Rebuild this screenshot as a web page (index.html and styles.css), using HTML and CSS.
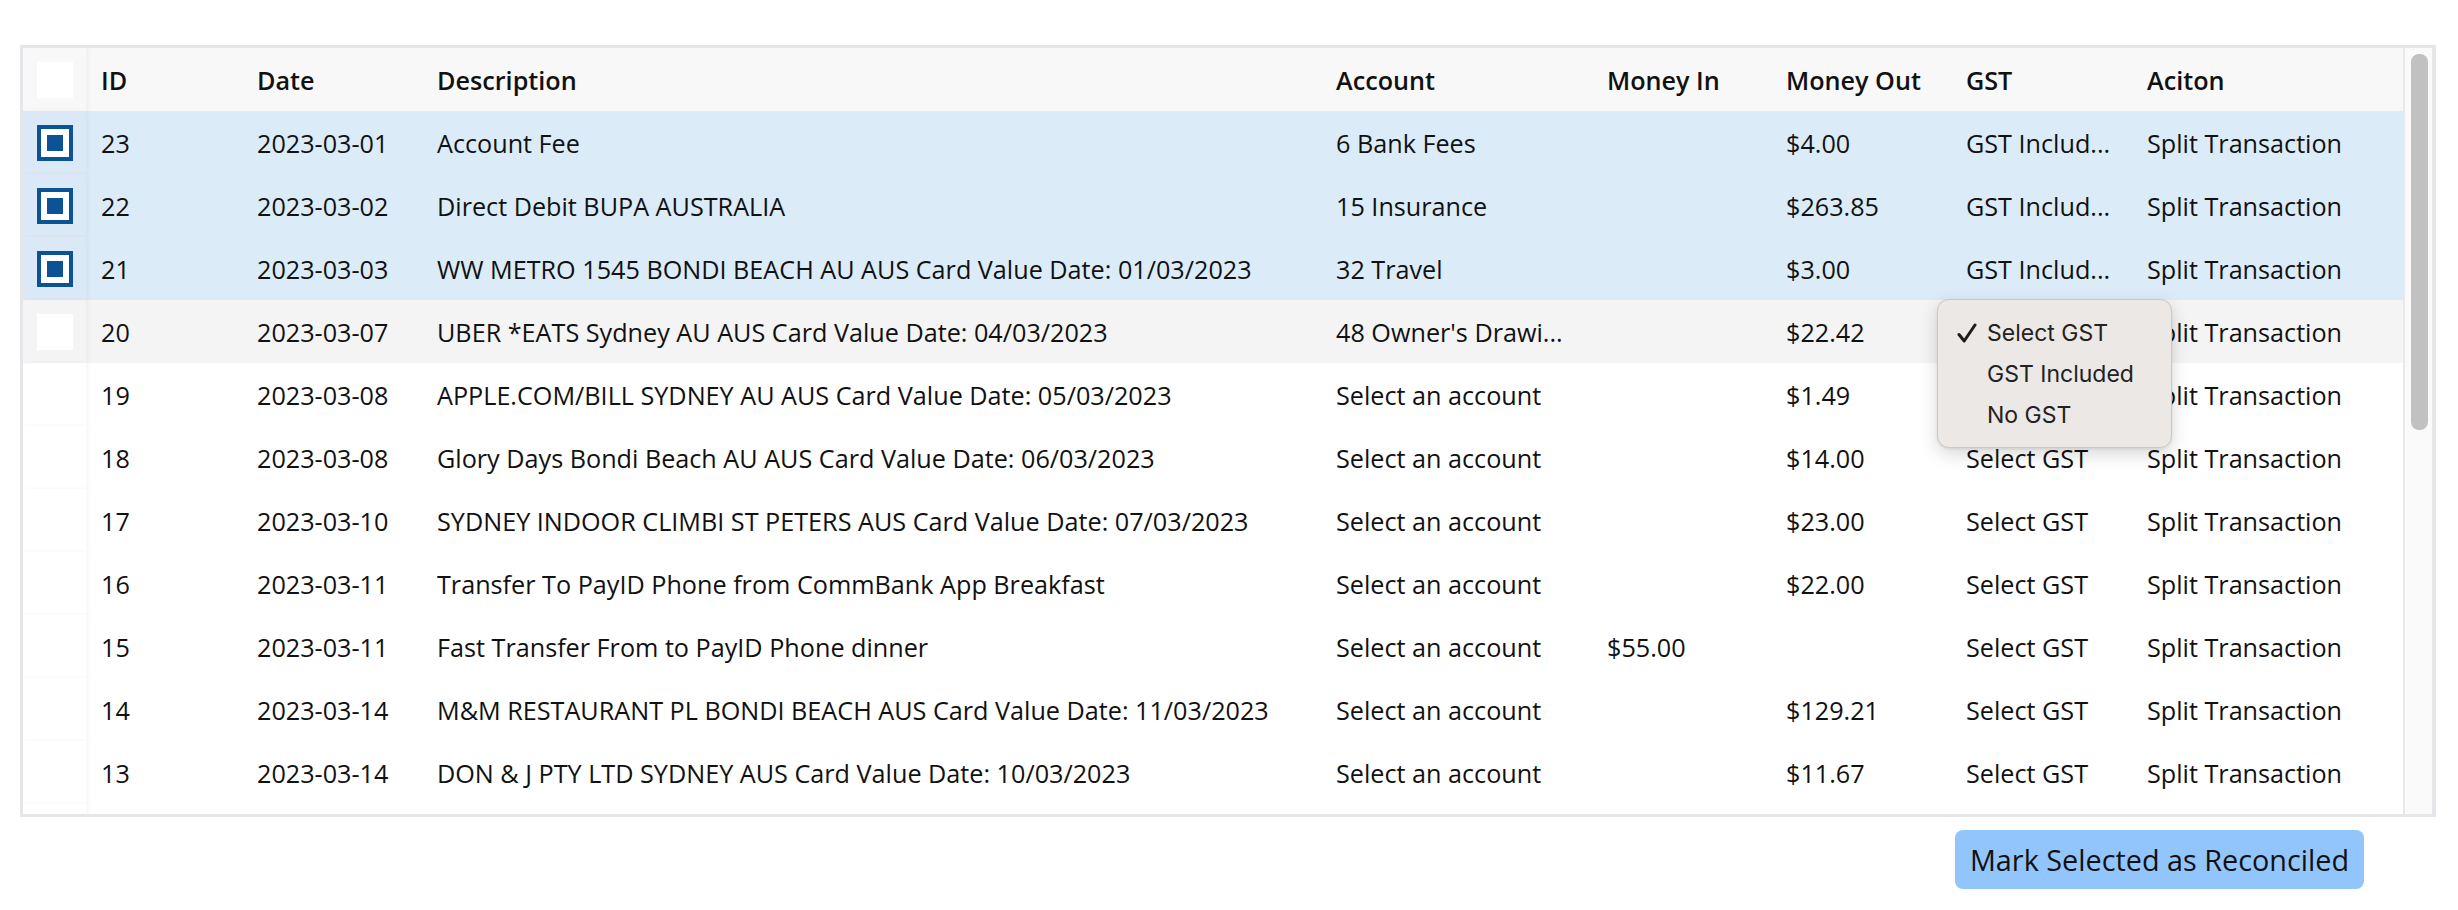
FILE: index.html
```html
<!DOCTYPE html>
<html lang="en">
<head>
<meta charset="utf-8">
<title>Transactions</title>
<link rel="stylesheet" href="styles.css">
</head>
<body>
<main class="page">
  <section class="card">
    <div class="scroller">
      <table class="tx">
        <colgroup>
          <col class="c-check"><col class="c-id"><col class="c-date"><col class="c-desc"><col class="c-acct"><col class="c-in"><col class="c-out"><col class="c-gst"><col class="c-act">
        </colgroup>
        <thead>
          <tr>
            <th class="sel"><input type="checkbox" class="cb"></th>
            <th>ID</th><th>Date</th><th>Description</th><th>Account</th><th>Money In</th><th>Money Out</th><th>GST</th><th>Aciton</th>
          </tr>
        </thead>
        <tbody>
          <tr class="selected"><td class="sel"><input type="checkbox" class="cb" checked></td><td>23</td><td>2023-03-01</td><td>Account Fee</td><td>6 Bank Fees</td><td></td><td>$4.00</td><td>GST Includ...</td><td>Split Transaction</td></tr>
          <tr class="selected"><td class="sel"><input type="checkbox" class="cb" checked></td><td>22</td><td>2023-03-02</td><td>Direct Debit BUPA AUSTRALIA</td><td>15 Insurance</td><td></td><td>$263.85</td><td>GST Includ...</td><td>Split Transaction</td></tr>
          <tr class="selected"><td class="sel"><input type="checkbox" class="cb" checked></td><td>21</td><td>2023-03-03</td><td>WW METRO 1545 BONDI BEACH AU AUS Card Value Date: 01/03/2023</td><td>32 Travel</td><td></td><td>$3.00</td><td>GST Includ...</td><td>Split Transaction</td></tr>
          <tr class="hover"><td class="sel"><input type="checkbox" class="cb"></td><td>20</td><td>2023-03-07</td><td>UBER *EATS Sydney AU AUS Card Value Date: 04/03/2023</td><td>48 Owner's Drawi...</td><td></td><td>$22.42</td><td>Select GST</td><td>Split Transaction</td></tr>
          <tr><td class="sel"></td><td>19</td><td>2023-03-08</td><td>APPLE.COM/BILL SYDNEY AU AUS Card Value Date: 05/03/2023</td><td>Select an account</td><td></td><td>$1.49</td><td>Select GST</td><td>Split Transaction</td></tr>
          <tr><td class="sel"></td><td>18</td><td>2023-03-08</td><td>Glory Days Bondi Beach AU AUS Card Value Date: 06/03/2023</td><td>Select an account</td><td></td><td>$14.00</td><td>Select GST</td><td>Split Transaction</td></tr>
          <tr><td class="sel"></td><td>17</td><td>2023-03-10</td><td>SYDNEY INDOOR CLIMBI ST PETERS AUS Card Value Date: 07/03/2023</td><td>Select an account</td><td></td><td>$23.00</td><td>Select GST</td><td>Split Transaction</td></tr>
          <tr><td class="sel"></td><td>16</td><td>2023-03-11</td><td>Transfer To PayID Phone from CommBank App Breakfast</td><td>Select an account</td><td></td><td>$22.00</td><td>Select GST</td><td>Split Transaction</td></tr>
          <tr><td class="sel"></td><td>15</td><td>2023-03-11</td><td>Fast Transfer From to PayID Phone dinner</td><td>Select an account</td><td>$55.00</td><td></td><td>Select GST</td><td>Split Transaction</td></tr>
          <tr><td class="sel"></td><td>14</td><td>2023-03-14</td><td>M&amp;M RESTAURANT PL BONDI BEACH AUS Card Value Date: 11/03/2023</td><td>Select an account</td><td></td><td>$129.21</td><td>Select GST</td><td>Split Transaction</td></tr>
          <tr><td class="sel"></td><td>13</td><td>2023-03-14</td><td>DON &amp; J PTY LTD SYDNEY AUS Card Value Date: 10/03/2023</td><td>Select an account</td><td></td><td>$11.67</td><td>Select GST</td><td>Split Transaction</td></tr>
          <tr class="cut"><td class="sel"></td><td colspan="8"></td></tr>
        </tbody>
      </table>
    </div>
    <div class="rail" aria-hidden="true"><div class="thumb"></div></div>
    <ul class="menu" role="listbox">
      <li class="opt checked" role="option" aria-selected="true">
        <svg class="tick" width="20" height="20" viewBox="0 0 20 20" aria-hidden="true"><path d="M2 11.5 L7.2 18 L18 2" fill="none" stroke="#1c1c1c" stroke-width="3" stroke-linecap="round" stroke-linejoin="round"/></svg>
        <span>Select GST</span>
      </li>
      <li class="opt" role="option"><span>GST Included</span></li>
      <li class="opt" role="option"><span>No GST</span></li>
    </ul>
  </section>
  <div class="actions">
    <button class="btn" type="button">Mark Selected as Reconciled</button>
  </div>
</main>
</body>
</html>
```

FILE: styles.css
```css
* { box-sizing: border-box; }

html, body {
  margin: 0;
  background: #ffffff;
}

body {
  font-family: "Open Sans", "Noto Sans", sans-serif;
  font-size: 25.2px;
  color: #111111;
}

.page {
  padding: 45px 22px 0 20px;
}

.card {
  position: relative;
  display: flex;
  border: 3px solid #e6e6ea;
  height: 772px;
}

.scroller {
  flex: 1;
  min-width: 0;
  height: 100%;
  overflow: hidden;
}

.rail {
  flex: 0 0 30px;
  background: #fafafa;
  border-left: 2px solid #e9e9ec;
  border-right: 1px solid #e9e9ec;
  padding: 6px 4px 0 6px;
}

.thumb {
  height: 376px;
  background: #c1c1c1;
  border-radius: 8px;
}

.tx {
  width: 100%;
  table-layout: fixed;
  border-collapse: separate;
  border-spacing: 0;
}

.c-check { width: 63px; }
.c-id { width: 156px; }
.c-date { width: 180px; }
.c-desc { width: 899px; }
.c-acct { width: 271px; }
.c-in { width: 179px; }
.c-out { width: 180px; }
.c-gst { width: 181px; }
.c-act { width: 271px; }

.tx th,
.tx td {
  height: 63px;
  padding: 0 15px;
  text-align: left;
  vertical-align: middle;
  white-space: nowrap;
  overflow: hidden;
}

.tx th {
  background: #f8f8f8;
  font-weight: 600;
}

.tx td { background: #ffffff; }

.tx tr.selected td { background: #dbecf8; }
.tx tr.hover td { background: #f4f4f4; }

.tx .sel {
  position: relative;
  z-index: 1;
  padding: 0;
  text-align: center;
  overflow: visible;
  box-shadow: 2px 0 5px rgba(0, 0, 0, 0.045);
}
.tx tr.selected td.sel { background: #dae9f5; }

.cb {
  appearance: none;
  -webkit-appearance: none;
  display: block;
  margin: 0 auto;
  width: 36px;
  height: 36px;
  background: #ffffff;
  border: 0;
  position: relative;
}
.cb:checked {
  border: 4px solid #0b5394;
}
.cb:checked::after {
  content: "";
  position: absolute;
  left: 6px;
  top: 6px;
  width: 16px;
  height: 16px;
  background: #0b5394;
}

.menu {
  position: absolute;
  left: 1914px;
  top: 251px;
  width: 235px;
  margin: 0;
  padding: 12px 0;
  list-style: none;
  background: #ece8e5;
  border: 1px solid #cbc8c5;
  border-radius: 12px;
  box-shadow: 0 6px 18px rgba(0, 0, 0, 0.16), 0 1px 3px rgba(0, 0, 0, 0.08);
  font-family: "Inter", "Liberation Sans", sans-serif;
  font-size: 23px;
  color: #222222;
  z-index: 5;
}

.opt {
  position: relative;
  height: 41px;
  display: flex;
  align-items: center;
  padding-left: 49px;
}

.tick {
  position: absolute;
  left: 19px;
  top: 11px;
}

.actions {
  display: flex;
  justify-content: flex-end;
  padding: 13px 72px 0 0;
}

.btn {
  font-family: "Open Sans", "Noto Sans", sans-serif;
  font-size: 28.8px;
  color: #111111;
  background: #93c5fd;
  border: 0;
  border-radius: 8px;
  height: 59px;
  width: 409px;
  padding: 0;
}
```
